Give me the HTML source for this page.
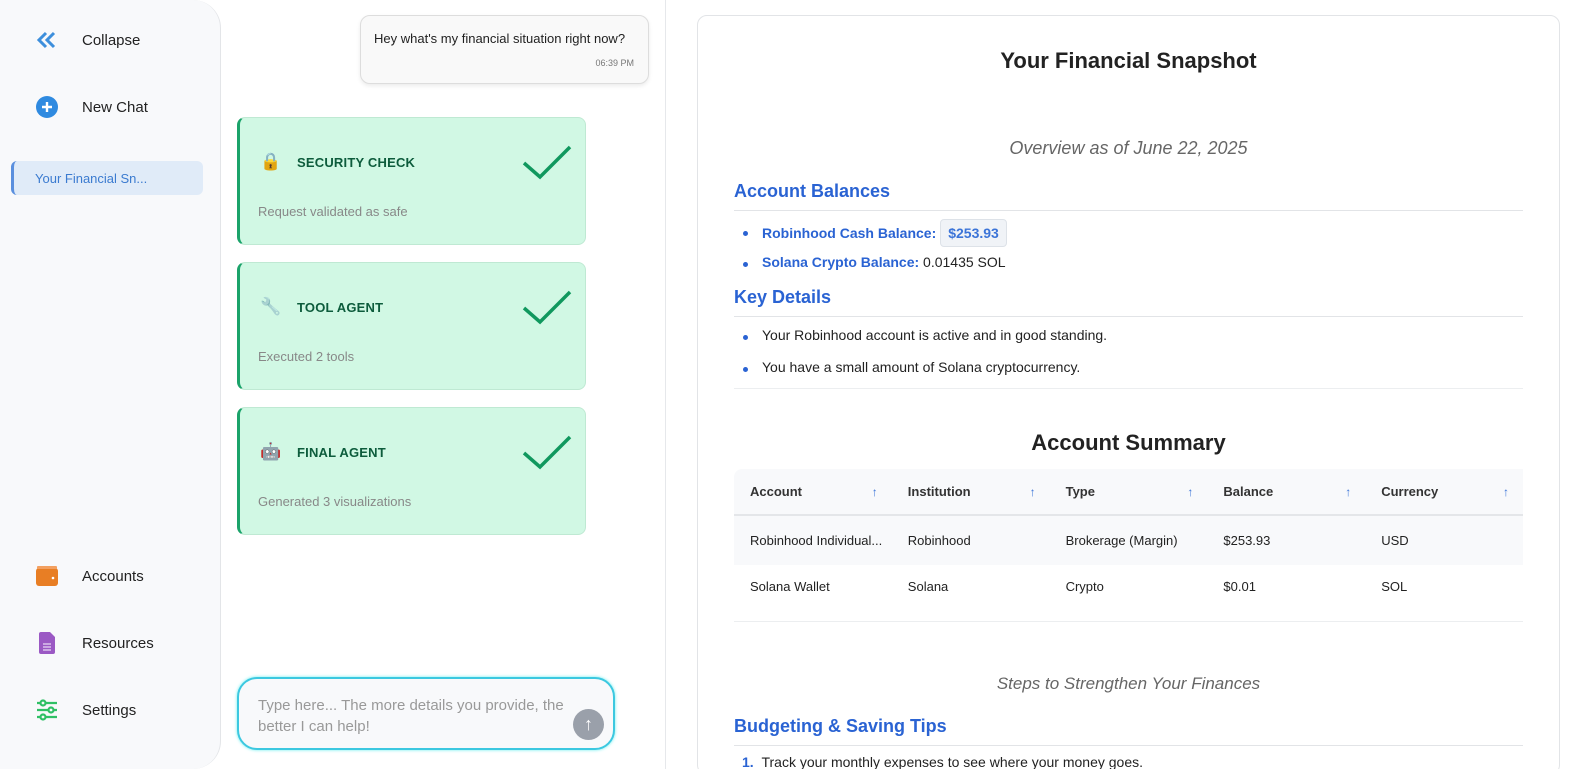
<!DOCTYPE html>
<html><head><meta charset="utf-8"><style>
*{box-sizing:border-box;margin:0;padding:0}
html,body{width:1588px;height:769px;overflow:hidden}
body{background:#fff;font-family:"Liberation Sans",sans-serif;position:relative;color:#222}
.side{position:absolute;left:0;top:0;width:221px;height:769px;background:#f8f9fb;border-right:1px solid #e3e5e8;border-radius:0 28px 28px 0}
.nav{position:absolute;left:35px;display:flex;align-items:center;font-size:15px;color:#222}
.nav .ic{width:24px;height:24px;margin-right:23px;display:flex;align-items:center;justify-content:center}
.hist{position:absolute;left:11px;top:161px;width:192px;height:34px;background:#e0ebf8;border-left:3px solid #5a8fde;border-radius:6px;font-size:13px;color:#3b7bd0;padding:10px 0 0 21px}
.vline{position:absolute;left:665px;top:0;width:1px;height:769px;background:#e6e8eb}
.bubble{position:absolute;left:360px;top:15px;width:289px;height:69px;background:#f9f9f9;border:1px solid #ddd;border-radius:10px;box-shadow:0 2px 4px rgba(0,0,0,.08);padding:15px 0 0 13px;font-size:13px}
.bubble .t{position:absolute;right:14px;top:42px;font-size:9px;color:#777}
.card{position:absolute;left:237px;width:349px;height:128px;background:#d1f8e4;border:1px solid #bfe9d3;border-left:3px solid #1ba36a;border-radius:8px}
.card .h{position:absolute;left:57px;top:37px;font-size:13px;font-weight:bold;color:#0d5c3c;letter-spacing:.2px}
.card .s{position:absolute;left:18px;top:86px;font-size:13px;color:#888}
.card .e{position:absolute;left:20px;top:34px;font-size:17px}
.card svg{position:absolute;left:282px;top:26px}
.input{position:absolute;left:237px;top:677px;width:378px;height:73px;border:2px solid #3cc8e0;border-radius:20px;background:#f8f9fb;padding:16px 0 0 19px;font-size:15px;color:#999;line-height:21px;box-shadow:0 0 3px #6ee}
.send{position:absolute;left:334px;top:30px;width:31px;height:31px;border-radius:50%;background:#9aa0aa;color:#fff;text-align:center;font-size:18px;line-height:31px}
.panel{position:absolute;left:697px;top:15px;width:863px;height:760px;border:1px solid #e2e4e7;border-radius:10px;background:#fff;overflow:hidden}
.c{position:absolute;left:36px;right:36px}
h1{position:absolute;left:0;right:0;top:32px;text-align:center;font-size:22px;color:#222}
.it{text-align:center;font-style:italic;color:#666;font-size:18px}
.h3{font-size:18px;font-weight:bold;color:#2a63d3;border-bottom:1px solid #e2e4e7;padding-bottom:8px}
.li{font-size:14px;padding-left:28px}
.dot{position:absolute;left:9px;top:8px;width:5px;height:5px;border-radius:50%;background:#2a63d3}
.b{color:#2a63d3;font-weight:bold}
.pill{display:inline-block;background:#f0f3f7;border:1px solid #dde2e8;border-radius:4px;padding:5px 7px;color:#3b74d8;font-weight:bold;margin-left:4px}
table{border-collapse:collapse;width:100%;font-size:13px;table-layout:fixed}
th{text-align:left;font-weight:bold;color:#333;height:46px;background:#f8f9fb;padding-left:16px;position:relative}
th span{position:absolute;right:14px;top:16px;color:#3b74d8;font-weight:normal;font-size:12px}
td{height:50px;padding-left:16px;white-space:nowrap;overflow:hidden}
</style></head><body>
<div class="side">
 <div class="nav" style="top:28px"><div class="ic"><svg width="22" height="20" viewBox="0 0 22 20"><path d="M10 3L3 10l7 7M18 3l-7 7 7 7" fill="none" stroke="#3d8fdc" stroke-width="3"/></svg></div>Collapse</div>
 <div class="nav" style="top:95px"><div class="ic"><svg width="22" height="22"><circle cx="11" cy="11" r="11" fill="#2f8ae0"/><path d="M11 6v10M6 11h10" stroke="#fff" stroke-width="2.4"/></svg></div>New Chat</div>
 <div class="hist">Your Financial Sn...</div>
 <div class="nav" style="top:564px"><div class="ic"><svg width="22" height="20"><rect x="0" y="2" width="22" height="18" rx="3" fill="#e87e24"/><rect x="1" y="0" width="20" height="3" rx="1" fill="#f3a060"/><circle cx="17" cy="12" r="1.3" fill="#fff"/></svg></div>Accounts</div>
 <div class="nav" style="top:631px"><div class="ic"><svg width="16" height="22"><path d="M2 0h9l5 5v15a2 2 0 0 1-2 2H2a2 2 0 0 1-2-2V2a2 2 0 0 1 2-2z" fill="#9b59c4"/><path d="M4 12h8M4 15h8M4 18h8" stroke="#e8d8f3" stroke-width="1.3"/></svg></div>Resources</div>
 <div class="nav" style="top:698px"><div class="ic"><svg width="22" height="22"><g stroke="#2fc065" stroke-width="2.2" fill="#f8f9fb"><path d="M1 4h20M1 11h20M1 18h20"/><circle cx="7" cy="4" r="2.5"/><circle cx="15" cy="11" r="2.5"/><circle cx="7" cy="18" r="2.5"/></g></svg></div>Settings</div>
</div>
<div class="vline"></div>
<div class="bubble">Hey what's my financial situation right now?<div class="t">06:39 PM</div></div>
<div class="card" style="top:117px"><div class="e">🔒</div><div class="h">SECURITY CHECK</div><div class="s">Request validated as safe</div><svg width="50" height="36"><path d="M2 19l16 14L48 3" fill="none" stroke="#10985e" stroke-width="3.5"/></svg></div>
<div class="card" style="top:262px"><div class="e" style="opacity:.5">🔧</div><div class="h">TOOL AGENT</div><div class="s">Executed 2 tools</div><svg width="50" height="36"><path d="M2 19l16 14L48 3" fill="none" stroke="#10985e" stroke-width="3.5"/></svg></div>
<div class="card" style="top:407px"><div class="e">🤖</div><div class="h">FINAL AGENT</div><div class="s">Generated 3 visualizations</div><svg width="50" height="36"><path d="M2 19l16 14L48 3" fill="none" stroke="#10985e" stroke-width="3.5"/></svg></div>
<div class="input">Type here... The more details you provide, the<br>better I can help!<div class="send">↑</div></div>
<div class="panel">
 <h1>Your Financial Snapshot</h1>
 <div class="c it" style="top:122px">Overview as of June 22, 2025</div>
 <div class="c h3" style="top:165px">Account Balances</div>
 <div class="c li" style="top:203px"><i class="dot" style="top:12px"></i><span class="b">Robinhood Cash Balance:</span><span class="pill">$253.93</span></div>
 <div class="c li" style="top:238px"><i class="dot"></i><span class="b">Solana Crypto Balance:</span> 0.01435 SOL</div>
 <div class="c h3" style="top:271px">Key Details</div>
 <div class="c li" style="top:311px"><i class="dot"></i>Your Robinhood account is active and in good standing.</div>
 <div class="c li" style="top:343px"><i class="dot"></i>You have a small amount of Solana cryptocurrency.</div>
 <div class="c" style="top:372px;border-top:1px solid #eceef0"></div>
 <div class="c" style="top:414px;text-align:center;font-size:22px;font-weight:bold">Account Summary</div>
 <div class="c" style="top:453px"><table>
  <tr style="border-bottom:2px solid #e4e6e9"><th style="border-radius:8px 0 0 0">Account<span>↑</span></th><th>Institution<span>↑</span></th><th>Type<span>↑</span></th><th>Balance<span>↑</span></th><th>Currency<span>↑</span></th></tr>
  <tr style="background:#f8f9fb"><td>Robinhood Individual...</td><td>Robinhood</td><td>Brokerage (Margin)</td><td>$253.93</td><td>USD</td></tr>
  <tr style="border-bottom:1px solid #eceef0"><td style="height:56px;padding-bottom:12px">Solana Wallet</td><td style="padding-bottom:12px">Solana</td><td style="padding-bottom:12px">Crypto</td><td style="padding-bottom:12px">$0.01</td><td style="padding-bottom:12px">SOL</td></tr>
 </table></div>
 <div class="c it" style="top:658px;font-size:17px">Steps to Strengthen Your Finances</div>
 <div class="c h3" style="top:700px">Budgeting &amp; Saving Tips</div>
 <div class="c" style="top:738px;font-size:14px;padding-left:8px"><span class="b">1.</span> &nbsp;Track your monthly expenses to see where your money goes.</div>
</div>
</body></html>
